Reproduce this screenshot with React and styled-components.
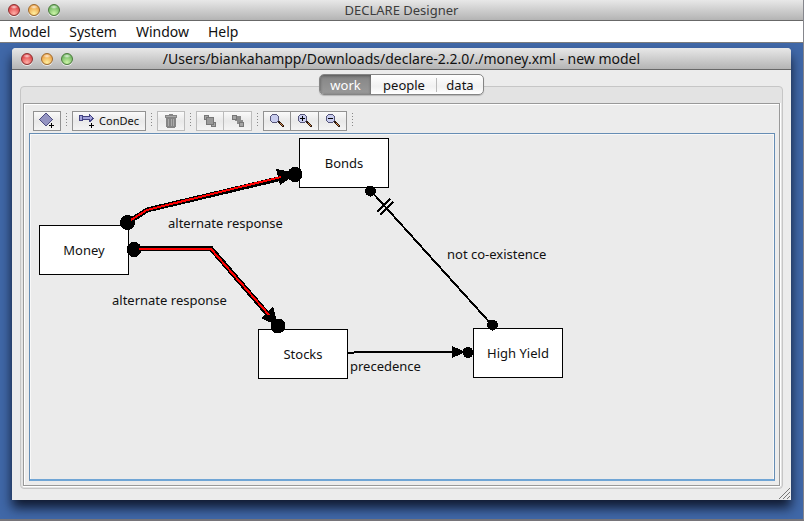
import React from "react";
import styled, { createGlobalStyle, css } from "styled-components";

const GlobalStyle = createGlobalStyle`
  *, *::before, *::after { box-sizing: border-box; }
  body {
    margin: 0;
    background: #77757a;
    color: #111;
    font-family: "Noto Sans", "Open Sans", sans-serif;
    font-size: 13px;
    line-height: 16px;
  }
  button { font: inherit; color: inherit; margin: 0; padding: 0; }
`;

const AppWindow = styled.div`
  display: flex;
  flex-direction: column;
  min-height: 100vh;
  border-right: 1px solid #85868c;
  border-bottom: 2px solid #77757a;
  background: #4068a8;
`;

const TitleBar = styled.header`
  display: grid;
  grid-template-columns: 60px 1fr 60px;
  align-items: center;
  height: ${(p) => (p.$inner ? 22 : 21)}px;
  padding: 0 ${(p) => (p.$inner ? 9 : 8)}px;
  border-bottom: 1px solid #686868;
  border-radius: ${(p) => (p.$inner ? "4px 4px 0 0" : "0")};
  background: linear-gradient(#e8e8e8, #b4b4b4);
  flex: none;
`;

const Title = styled.h1`
  margin: 0;
  font-size: ${(p) => (p.$dim ? 13 : 14)}px;
  line-height: 18px;
  font-weight: 400;
  text-align: center;
  white-space: nowrap;
  color: ${(p) => (p.$dim ? "#3c3c3c" : "#111")};
`;

const Lights = styled.div`
  display: flex;
  gap: 8px;
`;

const Light = styled.button`
  width: 12px;
  height: 12px;
  border: 1px solid ${(p) => p.$edge};
  border-radius: 50%;
  background:
    radial-gradient(ellipse 4px 2px at 50% 20%, #fffc, #fff0),
    radial-gradient(circle at 50% 85%, ${(p) => p.$glow}, ${(p) => p.$base} 70%);
  box-shadow: 0 1px 0 #eee;
`;

const MenuBar = styled.nav`
  display: flex;
  gap: 19px;
  height: 22px;
  padding: 0 9px;
  border-bottom: 1px solid #7d7d7d;
  background: #fff;
  flex: none;
`;

const MenuItem = styled.button`
  border: 0;
  background: none;
  font-size: 14px;
  line-height: 20px;
`;

const Desktop = styled.main`
  display: flex;
  flex: 1;
  padding: 5px 12px 19px 12px;
`;

const Document = styled.section`
  display: flex;
  flex: 1;
  flex-direction: column;
  min-width: 0;
  border-radius: 4px 4px 0 0;
  background: #ececec;
  box-shadow: 0 8px 12px #101a30;
`;

const DocumentBody = styled.div`
  position: relative;
  display: flex;
  flex: 1;
  flex-direction: column;
  padding: 4px 8px 11px;
`;

const TabList = styled.div`
  z-index: 1;
  display: flex;
  align-self: center;
  height: 21px;
  margin-bottom: -9px;
  border: 1px solid #858585;
  border-radius: 5px;
  background: linear-gradient(#fff, #f1f1f1 60%, #fff);
  box-shadow: 0 1px 1px #0003;
  overflow: hidden;
`;

const Tab = styled.button`
  width: ${(p) => p.$width}px;
  border: 0;
  line-height: 18px;
  background: none;
  ${(p) =>
    p.$selected &&
    css`
      color: #fff;
      background: linear-gradient(#858585, #999);
      box-shadow: inset 0 1px 3px #555;
    `}
  ${(p) =>
    p.$divided &&
    css`
      background: linear-gradient(#bbb, #bbb) right center / 1px 14px no-repeat;
    `}
`;

const TabPane = styled.div`
  display: flex;
  flex: 1;
  padding: 16px 2px 2px;
  border: 1px solid #c6c6c6;
  border-radius: 4px;
  background: #e3e3e3;
`;

const WorkPanel = styled.div`
  display: flex;
  flex: 1;
  flex-direction: column;
  min-width: 0;
  padding: 7px 4px 4px 5px;
  border: 1px solid #999;
  box-shadow: inset 1px 1px 0 #fff, 0 1px 0 #fff, 1px 0 0 #fff;
  background: #ececec;
`;

const ToolBar = styled.div`
  display: flex;
  height: 22px;
  padding: 0 4px 2px;
`;

const ToolButton = styled.button`
  display: flex;
  align-items: center;
  justify-content: center;
  gap: 4px;
  width: ${(p) => (p.$wide ? 74 : 28)}px;
  height: 20px;
  border: 1px solid #929292;
  border-left-width: ${(p) => (p.$joined ? 0 : 1)}px;
  background: linear-gradient(#fafafa, #e9e9e9 50%, #f4f4f4);
  font-size: 11px;
  &:disabled { border-color: #bcbcbc; }
`;

const Divider = styled.span`
  width: 11px;
  height: 14px;
  margin-top: 2px;
  background: repeating-linear-gradient(#888 0 1px, transparent 1px 3px) center / 1px 100% no-repeat;
`;

const Canvas = styled.div`
  position: relative;
  flex: 1;
  min-height: 260px;
  border: 1px solid #668db4;
  border-bottom: 2px solid #70a5d5;
  box-shadow: inset 1px 1px 0 #f8f8f8, inset -1px 0 0 #f8f8f8;
  background: #ebebeb;
  overflow: hidden;
`;

const Edges = styled.svg`
  position: absolute;
  inset: 0;
  width: 100%;
  height: 100%;
  shape-rendering: crispEdges;
`;

const Activity = styled.div`
  position: absolute;
  left: ${(p) => p.$x}px;
  top: ${(p) => p.$y}px;
  display: flex;
  align-items: center;
  justify-content: center;
  width: 90px;
  height: 50px;
  border: 1px solid #000;
  background: #fff;
`;

const EdgeLabel = styled.span`
  position: absolute;
  left: ${(p) => p.$x}px;
  top: ${(p) => p.$y}px;
  white-space: nowrap;
`;

const Grip = styled.svg`
  position: absolute;
  right: 1px;
  bottom: 1px;
  width: 11px;
  height: 11px;
`;

const Icon = styled.svg`
  flex: none;
  width: 16px;
  height: 16px;
  shape-rendering: crispEdges;
`;

const lights = [
  ["Close", "#8c2f2e", "#ffb0a8", "#e0474a"],
  ["Minimize", "#a06a2c", "#fff0a0", "#eda54a"],
  ["Zoom", "#4a7a3c", "#cdf5a8", "#73b863"],
];

function WindowLights() {
  return (
    <Lights>
      {lights.map(([name, edge, glow, base]) => (
        <Light key={name} aria-label={name} $edge={edge} $glow={glow} $base={base} />
      ))}
    </Lights>
  );
}

function ActivityIcon() {
  return (
    <Icon viewBox="0 0 16 16">
      <path d="M6 0h2v1h1v1h1v1h1v1h1v1h1v1h1v1h-1v1h-1v1h-1v1h-1v1H9v1H8v1H6v-1H5v-1H4v-1H3V9H2V8H1V7H0V6h1V5h1V4h1V3h1V2h1V1h1z" fill="#4c4c80" />
      <path d="M6 1h2v1h1v1h1v1h1v1h1v1h1v1h-1v1h-1v1h-1v1H9v1H8v1H6v-1H5v-1H4V9H3V8H2V7H1V6h1V5h1V4h1V3h1V2h1z" fill="#9494c2" />
      <path d="M10 12h5v1h-5zM12 10h1v5h-1z" fill="#000" />
    </Icon>
  );
}

function ConstraintIcon() {
  return (
    <Icon viewBox="0 0 16 16">
      <path d="M0 2h4v1h6V1h1v1h1v1h1v1h1v1h1v1h-1v1h-1v1h-1v1h-2V7H4v1H0z" fill="#444482" />
      <path d="M1 3h2v4H1zM4 4h7v2H4zM11 3h1v1h1v2h-1v1h-1z" fill="#a3a3dc" />
      <path d="M10 12h5v1h-5zM12 10h1v5h-1z" fill="#000" />
    </Icon>
  );
}

function TrashIcon() {
  return (
    <Icon viewBox="0 0 16 16">
      <path d="M6 1h4v1h4v3H2V2h4zM3 5h10v9h-1v1H4v-1H3z" fill="#858585" />
      <path d="M3 3h10v1H3zM5 6h1v7H5zM8 6h1v7H8zM10 6h1v7h-1z" fill="#aaa" />
    </Icon>
  );
}

function LayersIcon({ back }) {
  return (
    <Icon viewBox="0 0 16 16">
      {back && <path d="M5 3h6v4h2v4H7V8H5z" fill="#8c8c8c" />}
      <path d="M2 2h5v5H2zM9 9h5v5H9z" fill="#777" />
      <path d="M3 3h3v3H3zM10 10h3v3h-3z" fill="#a5a5a5" />
      {!back && (
        <>
          <path d="M4 4h8v8H4z" fill="#777" />
          <path d="M5 5h6v6H5z" fill="#999" />
        </>
      )}
    </Icon>
  );
}

function LensIcon({ sign }) {
  return (
    <Icon viewBox="0 0 16 16">
      <path d="M3 1h5v1h1v1h1v5H9v1H8v1H3V9H2V8H1V3h1V2h1z" fill="#55557a" />
      <path d="M3 2h5v1h1v5H8v1H3V8H2V3h1z" fill="#c9cdef" />
      <path d="M9 8h2v1h1v1h1v1h1v1h1v2h-2v-1h-1v-1h-1v-1h-1v-1H9z" fill="#2b1a12" />
      <path d="M11 10h1v1h1v1h1v1h-1v-1h-1v-1h-1z" fill="#d98a4a" />
      {sign && <path d="M3 5h5v1H3z" fill="#000" />}
      {sign === "plus" && <path d="M5 3h1v5H5z" fill="#000" />}
    </Icon>
  );
}

const activities = [
  { name: "Bonds", x: 269, y: 4 },
  { name: "Money", x: 9, y: 91 },
  { name: "Stocks", x: 228, y: 195 },
  { name: "High Yield", x: 443, y: 194 },
];

const edgeLabels = [
  { text: "alternate response", x: 138, y: 81 },
  { text: "alternate response", x: 82, y: 158 },
  { text: "not co-existence", x: 417, y: 112 },
  { text: "precedence", x: 320, y: 224 },
];

function ConstraintEdges() {
  return (
    <Edges aria-hidden="true">
      <g fill="none" stroke="#000" strokeWidth="5">
        <path d="M97 89L117 76L265 41" />
        <path d="M104 114.5H181L248 192" />
      </g>
      <path d="M246 35L250 51L268 39zM231 184L243 172L248 192z" />
      <circle cx="97.5" cy="88.5" r="7.5" />
      <circle cx="104" cy="115.5" r="7.5" />
      <g fill="none" stroke="#f00" strokeWidth="2">
        <path d="M101 86L117 76L251 43" />
        <path d="M109 115H181L239 181" />
      </g>
      <g fill="none" stroke="#000" strokeWidth="2">
        <path d="M341 57L462 191M347 78L360 65M350 81L363 68" />
        <path d="M318 219H324M324 218H438" />
      </g>
      <path d="M422 212V224L436 218z" />
      <circle cx="265" cy="40.5" r="7.5" />
      <circle cx="248" cy="192" r="7.5" />
      <circle cx="340.5" cy="57" r="5.5" />
      <circle cx="462.5" cy="191" r="5.5" />
      <circle cx="438" cy="218.5" r="5.5" />
    </Edges>
  );
}

export default function App() {
  return (
    <>
      <GlobalStyle />
      <AppWindow>
        <TitleBar>
          <WindowLights />
          <Title $dim>DECLARE Designer</Title>
        </TitleBar>
        <MenuBar>
          {["Model", "System", "Window", "Help"].map((name) => (
            <MenuItem key={name}>{name}</MenuItem>
          ))}
        </MenuBar>
        <Desktop>
          <Document>
            <TitleBar $inner>
              <WindowLights />
              <Title as="h2">/Users/biankahampp/Downloads/declare-2.2.0/./money.xml - new model</Title>
            </TitleBar>
            <DocumentBody>
              <TabList role="tablist">
                <Tab role="tab" aria-selected="true" $selected $width={51}>work</Tab>
                <Tab role="tab" aria-selected="false" $divided $width={66}>people</Tab>
                <Tab role="tab" aria-selected="false" $width={46}>data</Tab>
              </TabList>
              <TabPane>
                <WorkPanel>
                  <ToolBar role="toolbar">
                    <ToolButton aria-label="Add activity"><ActivityIcon /></ToolButton>
                    <Divider />
                    <ToolButton $wide><ConstraintIcon />ConDec</ToolButton>
                    <Divider />
                    <ToolButton aria-label="Delete" disabled><TrashIcon /></ToolButton>
                    <Divider />
                    <ToolButton aria-label="Bring to front" disabled><LayersIcon /></ToolButton>
                    <ToolButton aria-label="Send to back" disabled $joined><LayersIcon back /></ToolButton>
                    <Divider />
                    <ToolButton aria-label="Actual size"><LensIcon /></ToolButton>
                    <ToolButton aria-label="Zoom in" $joined><LensIcon sign="plus" /></ToolButton>
                    <ToolButton aria-label="Zoom out" $joined><LensIcon sign="minus" /></ToolButton>
                    <Divider />
                  </ToolBar>
                  <Canvas>
                    {activities.map((a) => (
                      <Activity key={a.name} $x={a.x} $y={a.y}>{a.name}</Activity>
                    ))}
                    <ConstraintEdges />
                    {edgeLabels.map((l) => (
                      <EdgeLabel key={l.y} $x={l.x} $y={l.y}>{l.text}</EdgeLabel>
                    ))}
                  </Canvas>
                </WorkPanel>
              </TabPane>
              <Grip viewBox="0 0 11 11" aria-hidden="true">
                <path d="M0 11L11 0M4 11L11 4M8 11L11 8" stroke="#777" />
              </Grip>
            </DocumentBody>
          </Document>
        </Desktop>
      </AppWindow>
    </>
  );
}
